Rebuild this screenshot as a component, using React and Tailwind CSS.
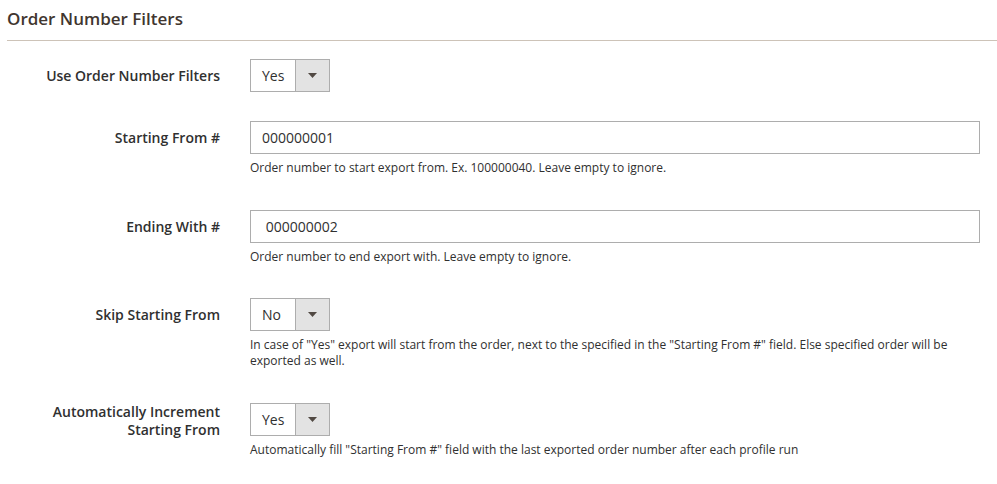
import React from "react";

function Arrow() {
  return (
    <svg width="9" height="5" viewBox="0 0 9 5" className="block">
      <path d="M0 0 H9 L4.5 5 Z" fill="#514943" />
    </svg>
  );
}

function Select({ value }) {
  return (
    <div className="flex h-[33px] w-[80px] border border-[#adadad] bg-white">
      <div className="flex w-[44px] items-center pl-[11px] text-[14px] text-[#303030]">{value}</div>
      <div className="flex flex-1 items-center justify-center border-l border-[#adadad] bg-[#e3e3e3]">
        <Arrow />
      </div>
    </div>
  );
}

function TextInput({ value }) {
  return (
    <div className="flex h-[33px] w-[730px] items-center border border-[#adadad] bg-white pl-[11px] text-[14px] text-[#303030] whitespace-pre">
      {value}
    </div>
  );
}

function Note({ children }) {
  return <div className="mt-[6px] w-[730px] text-[12px] leading-[16px] text-[#303030]">{children}</div>;
}

function Row({ label, twoLine, children, mb }) {
  return (
    <div className={`flex ${mb}`}>
      <div
        className={`w-[213px] shrink-0 text-right text-[14px] font-semibold text-[#303030] ${
          twoLine ? "pt-0 leading-[18px]" : "leading-[33px]"
        }`}
      >
        {label}
      </div>
      <div className="ml-[30px] flex flex-col">{children}</div>
    </div>
  );
}

export default function App() {
  return (
    <div
      className="min-h-[484px] w-[997px] bg-white pl-[7px]"
      style={{ fontFamily: '"Open Sans", "Noto Sans", sans-serif' }}
    >
      <div className="h-[41px] border-b border-[#cdc3b8] pt-[7px] text-[17px] font-semibold leading-[23px] text-[#41362f]">
        Order Number Filters
      </div>
      <div className="mt-[18px] flex flex-col">
        <Row label="Use Order Number Filters" mb="mb-[29px]">
          <Select value="Yes" />
        </Row>
        <Row label="Starting From #" mb="mb-[34px]">
          <TextInput value="000000001" />
          <Note>Order number to start export from. Ex. 100000040. Leave empty to ignore.</Note>
        </Row>
        <Row label="Ending With #" mb="mb-[33px]">
          <TextInput value=" 000000002" />
          <Note>Order number to end export with. Leave empty to ignore.</Note>
        </Row>
        <Row label="Skip Starting From" mb="mb-[34px]">
          <Select value="No" />
          <Note>
            In case of "Yes" export will start from the order, next to the specified in the "Starting From #" field. Else specified order will be exported as well.
          </Note>
        </Row>
        <Row label={<>Automatically Increment<br />Starting From</>} twoLine mb="mb-[20px]">
          <Select value="Yes" />
          <Note>Automatically fill "Starting From #" field with the last exported order number after each profile run</Note>
        </Row>
      </div>
    </div>
  );
}
